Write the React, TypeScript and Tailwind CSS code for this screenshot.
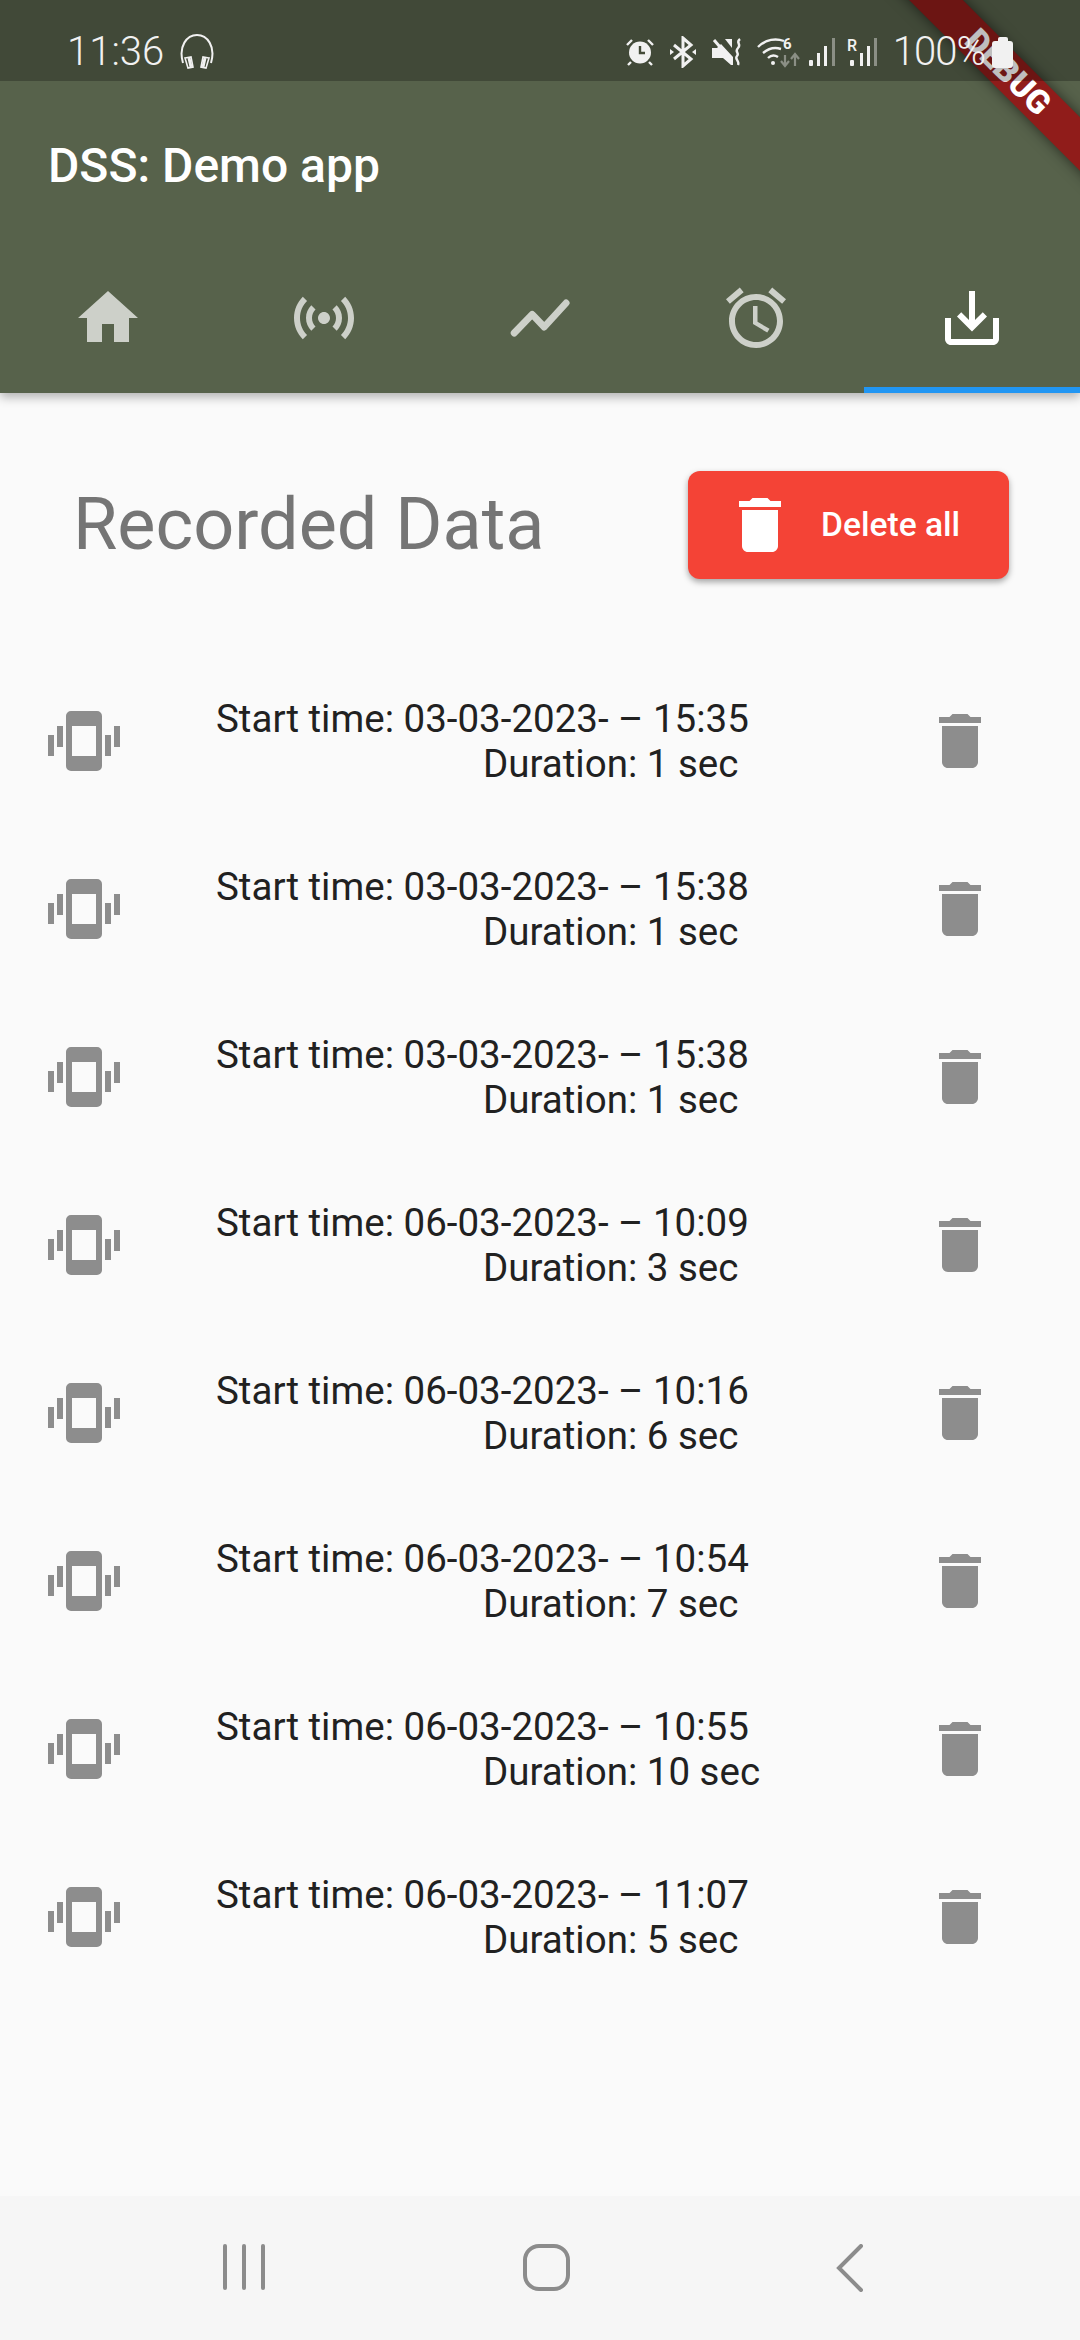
const rows = [
  { start: '03-03-2023- – 15:35', duration: '1 sec' },
  { start: '03-03-2023- – 15:38', duration: '1 sec' },
  { start: '03-03-2023- – 15:38', duration: '1 sec' },
  { start: '06-03-2023- – 10:09', duration: '3 sec' },
  { start: '06-03-2023- – 10:16', duration: '6 sec' },
  { start: '06-03-2023- – 10:54', duration: '7 sec' },
  { start: '06-03-2023- – 10:55', duration: '10 sec' },
  { start: '06-03-2023- – 11:07', duration: '5 sec' },
];

const tabs = [
  'M10 20v-6h4v6h5v-8h3L12 3 2 12h3v8z',
  'M7.76 16.24C6.67 15.16 6 13.66 6 12s.67-3.16 1.76-4.24l1.42 1.42C8.45 9.9 8 10.9 8 12c0 1.1.45 2.1 1.17 2.83l-1.41 1.41zm8.48 0C17.33 15.16 18 13.66 18 12s-.67-3.16-1.76-4.24l-1.42 1.42C15.55 9.9 16 10.9 16 12c0 1.1-.45 2.1-1.17 2.83l1.41 1.41zM12 10c-1.1 0-2 .9-2 2s.9 2 2 2 2-.9 2-2-.9-2-2-2zm8 2c0 2.21-.9 4.21-2.35 5.65l1.42 1.42C20.88 17.26 22 14.76 22 12s-1.12-5.26-2.93-7.07l-1.42 1.42C19.1 7.79 20 9.79 20 12zM6.35 6.35L4.93 4.93C3.12 6.74 2 9.24 2 12s1.12 5.26 2.93 7.07l1.42-1.42C4.9 16.21 4 14.21 4 12s.9-4.21 2.35-5.65z',
  'M3.4 17l6-6.2 4 4.2 7.3-8',
  'M22 5.72l-4.6-3.86-1.29 1.53 4.6 3.86L22 5.72zM7.88 3.39L6.6 1.86 2 5.71l1.29 1.53 4.59-3.85zM12.5 8H11v6l4.75 2.85.75-1.23-4-2.37V8zM12 4c-4.97 0-9 4.03-9 9s4.02 9 9 9c4.97 0 9-4.03 9-9s-4.03-9-9-9zm0 16c-3.87 0-7-3.13-7-7s3.13-7 7-7 7 3.13 7 7-3.13 7-7 7z',
  'M19 12v7H5v-7H3v7c0 1.1.9 2 2 2h14c1.1 0 2-.9 2-2v-7h-2zm-6 .67l2.59-2.58L17 11.5l-5 5-5-5 1.41-1.41L11 12.67V3h2z',
];

const TrashIcon = ({ className }: { className: string }) => (
  <svg viewBox="0 0 24 24" fill="currentColor" className={className}>
    <path d="M6 19c0 1.1.9 2 2 2h8c1.1 0 2-.9 2-2V7H6v12zM19 4h-3.5l-1-1h-5l-1 1H5v2h14V4z" />
  </svg>
);

const VibrationIcon = () => (
  <svg viewBox="0 0 72 60" fill="#8d8d8d" className="w-[72px] h-[60px]">
    <path
      fillRule="evenodd"
      d="M23 0h26a5 5 0 0 1 5 5v50a5 5 0 0 1-5 5H23a5 5 0 0 1-5-5V5a5 5 0 0 1 5-5zM24 15v30h24V15z"
    />
    <rect x="0" y="24" width="6" height="21" />
    <rect x="9" y="15" width="6" height="21" />
    <rect x="57" y="24" width="6" height="21" />
    <rect x="66" y="15" width="6" height="21" />
  </svg>
);

const StatusIcons = () => (
  <div className="flex items-center text-[#f1f1f1]">
    {/* alarm */}
    <svg viewBox="0 0 28 28" className="w-[28px] h-[28px]">
      <circle cx="14" cy="14.5" r="11" fill="currentColor" />
      <path d="M14 8v7h5" fill="none" stroke="#434a38" strokeWidth="2.4" />
      <path d="M1 7l5-5M27 7l-5-5M5 24l-3 3M23 24l3 3" fill="none" stroke="currentColor" strokeWidth="2.4" />
    </svg>
    {/* bluetooth */}
    <svg viewBox="0 0 26 32" className="w-[26px] h-[32px] ml-[16px]">
      <path d="M4 9l17 14-8 7V2l8 7L4 23" fill="none" stroke="currentColor" strokeWidth="3" />
      <path d="M0 13l4 3-4 3zM26 13l-4 3 4 3z" fill="currentColor" />
    </svg>
    {/* mute */}
    <svg viewBox="0 0 30 28" className="w-[30px] h-[28px] ml-[16px]">
      <path d="M0 10h5l4-4 12 13v8h-2l-8-7H0z" fill="currentColor" />
      <path d="M2 2l18 21" stroke="currentColor" strokeWidth="3" />
      <path d="M13 1l7 0v9z" fill="currentColor" />
      <path d="M28 1c-5 4 2 5-2 9s2 5-1 8 3 5 1 9" fill="none" stroke="currentColor" strokeWidth="2.4" />
    </svg>
    {/* wifi */}
    <svg viewBox="0 0 43 32" className="w-[43px] h-[32px] ml-[15px]">
      <path d="M1 11c8-8 18-9 26-6M6 17c6-5 12-6 18-4M11 22c3-3 7-3 10-1" fill="none" stroke="currentColor" strokeWidth="2.4" />
      <circle cx="16" cy="27" r="2" fill="currentColor" />
      <text x="26" y="13" fontSize="15" fontWeight="700" fill="currentColor" fontFamily="Roboto, sans-serif">6</text>
      <path d="M28 19v10M24 25l4 5 4-5" fill="none" stroke="#8b8f85" strokeWidth="2.2" />
      <path d="M38 30V19M34 23l4-5 4 5" fill="none" stroke="#8b8f85" strokeWidth="2.2" />
    </svg>
    {/* signal */}
    <svg viewBox="0 0 27 28" className="w-[27px] h-[28px] ml-[9px]">
      <rect x="0" y="22" width="4" height="6" rx="1" fill="currentColor" />
      <rect x="8" y="15" width="3" height="13" fill="currentColor" />
      <rect x="15" y="8" width="3" height="20" fill="currentColor" />
      <rect x="23" y="0" width="3" height="28" fill="#8b8f85" />
    </svg>
    {/* roaming signal */}
    <svg viewBox="0 0 30 28" className="w-[30px] h-[28px] ml-[11px]">
      <text x="0" y="13" fontSize="16" fontWeight="500" fill="currentColor" fontFamily="Roboto, sans-serif">R</text>
      <rect x="3" y="22" width="4" height="6" rx="1" fill="currentColor" />
      <rect x="13" y="15" width="3" height="13" fill="currentColor" />
      <rect x="20" y="8" width="3" height="20" fill="currentColor" />
      <rect x="27" y="0" width="3" height="28" fill="#8b8f85" />
    </svg>
    <span className="ml-[16px] text-[40px] leading-[40px] font-[350] tracking-[-1px]">100%</span>
    {/* battery */}
    <div className="ml-[7px] flex flex-col items-center">
      <div className="w-[10px] h-[4px] bg-[#f1f1f1] rounded-t-[2px]" />
      <div className="w-[21px] h-[27px] bg-[#f1f1f1] rounded-[3px]" />
    </div>
  </div>
);

export default function App() {
  return (
    <div className="relative w-[1080px] h-[2340px] overflow-hidden flex flex-col bg-[#fafafa] text-[#212121] font-['Roboto',sans-serif]">
      <header className="relative z-10 h-[393px] shrink-0 bg-[#57624b] shadow-[0_4px_10px_rgba(0,0,0,0.3)] flex flex-col pt-[81px]">
        <h1 className="pl-[48px] pt-[57px] h-[198px] text-[48px] leading-[56px] font-medium text-white">DSS: Demo app</h1>
        <nav className="flex">
          {tabs.map((d, i) => (
            <div key={i} className={`relative w-[216px] h-[114px] flex justify-center pt-[3px] ${i === 4 ? 'text-white' : 'text-[#cdd0c9]'}`}>
              <svg viewBox="0 0 24 24" className="w-[72px] h-[72px]">
                {i === 2 ? (
                  <path d={d} fill="none" stroke="currentColor" strokeWidth="2.3" strokeLinecap="round" strokeLinejoin="round" />
                ) : (
                  <path d={d} fill="currentColor" />
                )}
              </svg>
              {i === 4 && <div className="absolute left-0 right-0 top-[108px] h-[6px] bg-[#2196f3]" />}
            </div>
          ))}
        </nav>
      </header>

      {/* debug banner */}
      <div className="absolute z-20 left-[828px] top-[53px] w-[360px] h-[38px] rotate-45 bg-[#901c1a] shadow-[0_0_14px_rgba(0,0,0,0.55)] flex items-center justify-center">
        <span className="text-[33px] leading-[38px] font-black text-white">DEBUG</span>
      </div>

      {/* status bar scrim sits over the banner */}
      <div className="absolute z-30 left-0 right-0 top-0 h-[81px] bg-black/25 flex items-start justify-between pl-[67px] pt-[32px] pr-[67px]">
        <div className="flex items-center text-[#f1f1f1]">
          <span className="text-[40px] leading-[40px] font-[350]">11:36</span>
          <svg viewBox="0 0 36 36" fill="none" stroke="currentColor" className="w-[36px] h-[36px] ml-[15px]">
            <path d="M4 29C-1 12 8 1 18 1s19 11 14 28" strokeWidth="2" />
            <path d="M6 24l6-1 2 10-5 1zM30 24l-6-1-2 10 5 1z" strokeWidth="1.6" />
            <path d="M10 24l2 9M26 24l-2 9" strokeWidth="3" />
          </svg>
        </div>
        <StatusIcons />
      </div>

      <main className="flex-1 flex flex-col">
        <div className="flex items-center justify-between pl-[73px] pr-[71px] pt-[78px]">
          <h2 className="text-[72px] leading-[108px] font-normal text-[#757575]">Recorded Data</h2>
          <button className="w-[321px] h-[108px] rounded-[12px] bg-[#f44336] shadow-[0_3px_6px_rgba(0,0,0,0.35)] flex items-center pl-[36px] text-white">
            <TrashIcon className="w-[72px] h-[72px]" />
            <span className="ml-[25px] text-[33.6px] font-medium">Delete all</span>
          </button>
        </div>
        <ul className="mt-[78px] flex flex-col">
          {rows.map((row, i) => (
            <li key={i} className="h-[168px] flex items-center pl-[48px] pr-[72px]">
              <VibrationIcon />
              <div className="ml-[96px] w-[600px] text-[38.5px] leading-[45px]">
                <div>Start time: {row.start}</div>
                <div className="pl-[267px]">Duration: {row.duration}</div>
              </div>
              <TrashIcon className="ml-[108px] w-[72px] h-[72px] text-[#8d8d8d]" />
            </li>
          ))}
        </ul>
      </main>

      <footer className="h-[144px] shrink-0 bg-[#f6f6f6] flex items-start pt-[48px]">
        <div className="ml-[223px] flex gap-[15px]">
          <div className="w-[4px] h-[46px] rounded-full bg-[#8c8c8c]" />
          <div className="w-[4px] h-[46px] rounded-full bg-[#8c8c8c]" />
          <div className="w-[4px] h-[46px] rounded-full bg-[#8c8c8c]" />
        </div>
        <div className="ml-[258px] w-[47px] h-[47px] rounded-[16px] border-[4px] border-[#8c8c8c]" />
        <svg viewBox="0 0 28 48" fill="none" stroke="#8c8c8c" strokeWidth="4" strokeLinecap="round" className="ml-[266px] w-[28px] h-[48px]">
          <path d="M25 2L3 24l22 22" />
        </svg>
      </footer>
    </div>
  );
}
